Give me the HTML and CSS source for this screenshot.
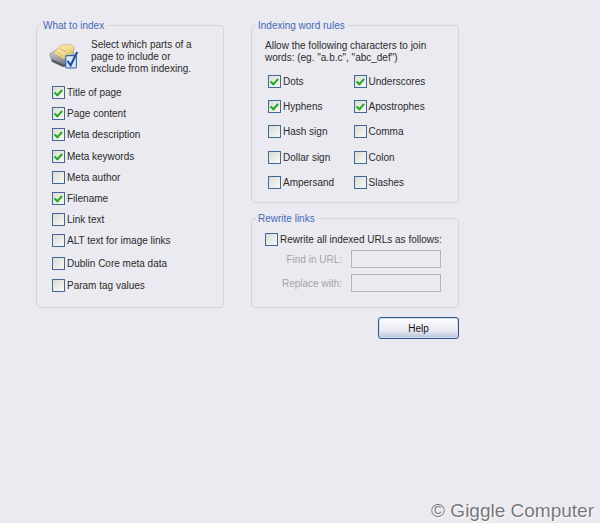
FILE: index.html
```html
<!DOCTYPE html>
<html lang="en">
<head>
<meta charset="utf-8">
<title>Indexing options</title>
<link rel="stylesheet" href="styles.css">
</head>
<body>
<main class="page">
  <section class="group what">
    <h2 class="legend">What to index</h2>
    <div class="intro">
      <svg class="icon" width="30" height="27" viewBox="0 0 34 30" aria-hidden="true">
        <defs>
          <linearGradient id="tray" x1="0" y1="0" x2="0" y2="1"><stop offset="0" stop-color="#e8e8e8"/><stop offset="1" stop-color="#6d6f78"/></linearGradient>
          <linearGradient id="paper" x1="0" y1="0" x2="1" y2="1"><stop offset="0" stop-color="#fff3b8"/><stop offset="1" stop-color="#e2c56a"/></linearGradient>
        </defs>
        <path d="M1 12 L11 6 L28 10 L29 17 L18 25 L3 19 Z" fill="url(#tray)" stroke="#777b84" stroke-width=".7"/>
        <path d="M5 11 L14 2 L24 1 L29 5 L27 11 L17 18 Z" fill="url(#paper)" stroke="#b69f5e" stroke-width=".7"/>
        <path d="M9 10 L17 15 L26 9 M12 6 L20 10" fill="none" stroke="#c9ad5c" stroke-width=".8"/>
        <path d="M3 18 L17 24 L20 22 L20 26 L16 27 L3 21 Z" fill="#55585f"/>
        <rect x="19" y="14" width="12" height="14" rx="1.5" fill="#dfe8f7" stroke="#2f5fa8" stroke-width="1.2"/>
        <path d="M21 20 L24.5 25 L32 10" fill="none" stroke="#1c4fa6" stroke-width="2.4"/>
      </svg>
      <p class="intro-text">Select which parts of a<br>page to include or<br>exclude from indexing.</p>
    </div>
    <div class="checks">
      <label class="row"><span class="box on"></span>Title of page</label>
      <label class="row"><span class="box on"></span>Page content</label>
      <label class="row"><span class="box on"></span>Meta description</label>
      <label class="row"><span class="box on"></span>Meta keywords</label>
      <label class="row"><span class="box"></span>Meta author</label>
      <label class="row"><span class="box on"></span>Filename</label>
      <label class="row"><span class="box"></span>Link text</label>
      <label class="row"><span class="box"></span>ALT text for image links</label>
      <label class="row tall"><span class="box"></span>Dublin Core meta data</label>
      <label class="row"><span class="box"></span>Param tag values</label>
    </div>
  </section>
  <div class="side">
    <section class="group rules">
      <h2 class="legend">Indexing word rules</h2>
      <p class="rules-text">Allow the following characters to join<br>words: (eg. "a.b.c", "abc_def")</p>
      <div class="rule-grid">
        <label class="row"><span class="box on"></span>Dots</label>
        <label class="row"><span class="box on"></span>Underscores</label>
        <label class="row"><span class="box on"></span>Hyphens</label>
        <label class="row"><span class="box on"></span>Apostrophes</label>
        <label class="row"><span class="box"></span>Hash sign</label>
        <label class="row"><span class="box"></span>Comma</label>
        <label class="row"><span class="box"></span>Dollar sign</label>
        <label class="row"><span class="box"></span>Colon</label>
        <label class="row"><span class="box"></span>Ampersand</label>
        <label class="row"><span class="box"></span>Slashes</label>
      </div>
    </section>
    <section class="group rewrite">
      <h2 class="legend">Rewrite links</h2>
      <label class="row rewrite-check"><span class="box"></span>Rewrite all indexed URLs as follows:</label>
      <div class="field"><span class="field-label">Find in URL:</span><span class="input"></span></div>
      <div class="field"><span class="field-label">Replace with:</span><span class="input"></span></div>
    </section>
    <div class="actions"><button class="help" type="button">Help</button></div>
  </div>
</main>
<footer class="credit">© Giggle Computer</footer>
</body>
</html>
```

FILE: styles.css
```css
html, body { margin: 0; padding: 0; }
body {
  width: 600px;
  height: 523px;
  overflow: hidden;
  position: relative;
  background: #ebeaf0;
  color: #2a2a2a;
  font-family: "Liberation Sans", Arial, sans-serif;
  font-size: 10px;
}
.page {
  display: flex;
  gap: 27px;
  padding: 25px 0 0 36px;
}
.group {
  position: relative;
  box-sizing: border-box;
  border: 1px solid #d6d5da;
  border-radius: 4px;
}
.legend {
  position: absolute;
  top: -7px;
  left: 4px;
  margin: 0;
  padding: 0 2px;
  background: #ebeaf0;
  color: #3f69b5;
  font-size: 10px;
  font-weight: normal;
  line-height: 13px;
}
.what { width: 188px; height: 283px; padding: 13px 0 0 15px; }
.intro { display: flex; gap: 12px; height: 44px; }
.icon { margin-top: 4px; margin-left: -3px; flex: none; }
.intro-text { margin: 0; line-height: 12.2px; }
.checks { display: flex; flex-direction: column; margin-top: -1px; }
.checks .row { height: 21.2px; }
.checks .tall { height: 22.5px; margin-top: 1px; }
.row { display: flex; align-items: center; gap: 2px; white-space: nowrap; }
.box {
  box-sizing: border-box;
  width: 13px;
  height: 13px;
  flex: none;
  border: 1px solid #3f6a98;
  background: linear-gradient(135deg, #dcdcd6, #f8f8f6);
  position: relative;
}
.on::after {
  content: "";
  position: absolute;
  left: 3px;
  top: 1px;
  width: 3px;
  height: 5.5px;
  border: solid #22a81f;
  border-width: 0 2px 2px 0;
  transform: rotate(42deg);
}
.side { width: 208px; display: flex; flex-direction: column; }
.rules { height: 178px; padding: 14px 0 0 13px; }
.rules-text { margin: 0; line-height: 12px; }
.rule-grid {
  display: grid;
  grid-template-columns: 85.5px 1fr;
  grid-template-rows: 25px 25px 25px 26px 25px;
  margin: 5px 0 0 3px;
}
.rewrite { height: 90px; margin-top: 15px; padding: 14px 0 0 13px; }
.rewrite-check { height: 13px; }
.field { display: flex; align-items: center; justify-content: flex-end; gap: 9px; height: 20px; margin: 3px 17px 4px 0; }
.field-label { color: #a5a5a8; }
.input { box-sizing: border-box; width: 90px; height: 18px; border: 1px solid #b5b5b7; background: #ebeaf0; }
.actions { display: flex; justify-content: flex-end; margin-top: 9px; }
.help {
  width: 81px;
  height: 22px;
  padding: 0;
  border: 1px solid #2f5587;
  border-radius: 3px;
  background: linear-gradient(#ffffff, #e8e8f0 65%, #b4c2da);
  box-shadow: inset 0 0 0 1px #d2ddef;
  color: #111;
  font: inherit;
}
.credit {
  position: absolute;
  right: 6px;
  bottom: 1px;
  color: #77777a;
  font-size: 19px;
  line-height: 22px;
  text-shadow: 0 0 1px #fff, 1px 1px 1px #fff;
}
```
